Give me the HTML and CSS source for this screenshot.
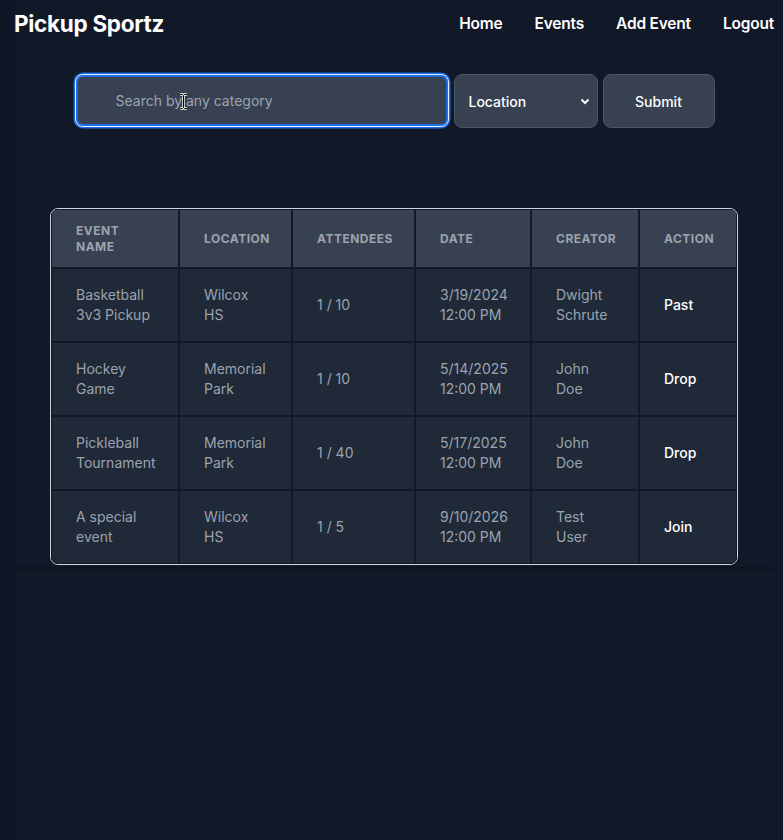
FILE: index.html
```html
<!DOCTYPE html>
<html lang="en">
<head>
<meta charset="utf-8">
<title>Pickup Sportz</title>
<link rel="stylesheet" href="styles.css">
</head>
<body>
<div class="app">
  <header class="topbar">
    <a class="brand" href="#">Pickup Sportz</a>
    <nav class="nav">
      <a href="#">Home</a>
      <a href="#">Events</a>
      <a href="#">Add Event</a>
      <a href="#">Logout</a>
    </nav>
  </header>

  <section class="content">
    <form class="search">
      <div class="search-field">
        <input class="search-input" type="text" placeholder="Search by any category">
        <svg class="cursor" width="9" height="17" viewBox="0 0 9 17"><path d="M1 1.5h2.5L4.5 2.5 5.5 1.5H8M4.5 2.5v12M1 15.5h2.5l1-1 1 1H8" fill="none" stroke="#fff" stroke-width="2.4"/><path d="M1 1.5h2.5L4.5 2.5 5.5 1.5H8M4.5 2.5v12M1 15.5h2.5l1-1 1 1H8" fill="none" stroke="#000" stroke-width="1"/></svg>
      </div>
      <select class="search-select">
        <option>Location</option>
      </select>
      <button class="search-btn" type="button">Submit</button>
    </form>

    <div class="table-wrap">
      <table class="events">
        <thead>
          <tr>
            <th class="c1">Event<br>Name</th>
            <th class="c2">Location</th>
            <th class="c3">Attendees</th>
            <th class="c4">Date</th>
            <th class="c5">Creator</th>
            <th class="c6">Action</th>
          </tr>
        </thead>
        <tbody>
          <tr>
            <td>Basketball<br>3v3 Pickup</td>
            <td>Wilcox<br>HS</td>
            <td>1 / 10</td>
            <td>3/19/2024<br>12:00 PM</td>
            <td>Dwight<br>Schrute</td>
            <td class="action">Past</td>
          </tr>
          <tr>
            <td>Hockey<br>Game</td>
            <td>Memorial<br>Park</td>
            <td>1 / 10</td>
            <td>5/14/2025<br>12:00 PM</td>
            <td>John<br>Doe</td>
            <td class="action">Drop</td>
          </tr>
          <tr>
            <td>Pickleball<br>Tournament</td>
            <td>Memorial<br>Park</td>
            <td>1 / 40</td>
            <td>5/17/2025<br>12:00 PM</td>
            <td>John<br>Doe</td>
            <td class="action">Drop</td>
          </tr>
          <tr>
            <td>A special<br>event</td>
            <td>Wilcox<br>HS</td>
            <td>1 / 5</td>
            <td>9/10/2026<br>12:00 PM</td>
            <td>Test<br>User</td>
            <td class="action">Join</td>
          </tr>
        </tbody>
      </table>
    </div>
  </section>
</div>
</body>
</html>
```

FILE: styles.css
```css
* { box-sizing: border-box; }

html, body {
  margin: 0;
  padding: 0;
  background: #0f1626;
  font-family: Inter, "Liberation Sans", Arial, sans-serif;
  color: #fff;
}

.app {
  margin-left: 14px;
  min-height: 840px;
  background: #111827;
  border-bottom-left-radius: 10px;
}

.topbar {
  display: flex;
  align-items: center;
  justify-content: space-between;
  height: 46px;
  padding-right: 9px;
}

.brand {
  color: #fff;
  text-decoration: none;
  font-weight: 700;
  font-size: 22.5px;
  letter-spacing: -0.3px;
}

.nav {
  display: flex;
  gap: 32px;
}

.nav a {
  color: #fff;
  text-decoration: none;
  font-size: 15.5px;
  font-weight: 600;
  letter-spacing: -0.2px;
}

.content {
  width: 760px;
  padding-top: 28px;
  padding-bottom: 2px;
  box-shadow: 0 3px 3px -1px rgba(0, 0, 0, 0.25);
}

.search {
  display: flex;
  justify-content: center;
  gap: 5px;
  margin: 0;
  padding-left: 1px;
}

.search-field {
  position: relative;
}

.search-input {
  display: block;
  width: 374px;
  height: 53px;
  padding: 0 16px 0 40px;
  background: #374151;
  color: #fff;
  font-family: inherit;
  font-size: 14px;
  border: 1px solid #e6efff;
  border-radius: 8px;
  box-shadow: 0 0 0 1.5px #1a6ee8, inset 0 0 0 2px #1a6ee8;
  outline: none;
}

.search-input::placeholder {
  color: #9ca3af;
}

.cursor {
  position: absolute;
  left: 104px;
  top: 19px;
}

.search-select {
  width: 144px;
  height: 54px;
  padding: 0 14px;
  background: #374151 url("data:image/svg+xml;utf8,<svg xmlns='http://www.w3.org/2000/svg' width='10' height='7' viewBox='0 0 10 7'><path d='M1.5 1.5 5 5 8.5 1.5' fill='none' stroke='white' stroke-width='2'/></svg>") no-repeat right 7px center;
  color: #fff;
  font-family: inherit;
  font-size: 14px;
  font-weight: 500;
  border: 1px solid #4b5563;
  border-radius: 8px;
  appearance: none;
  -webkit-appearance: none;
}

.search-btn {
  width: 112px;
  height: 54px;
  background: #374151;
  color: #fff;
  font-family: inherit;
  font-size: 14px;
  font-weight: 500;
  border: 1px solid #4b5563;
  border-radius: 8px;
}

.table-wrap {
  width: 688px;
  margin: 80px auto 0;
  border: 1px solid #d1d5db;
  border-radius: 8px;
  overflow: hidden;
}

.events {
  width: 686px;
  table-layout: fixed;
  border-collapse: separate;
  border-spacing: 0;
}

.events th,
.events td {
  border: 1px solid #111827;
  padding: 0 24px;
  text-align: left;
  vertical-align: middle;
  white-space: nowrap;
}

.events th {
  height: 59px;
  background: #374151;
  color: #9ca3af;
  font-size: 12px;
  font-weight: 700;
  line-height: 16px;
  text-transform: uppercase;
  letter-spacing: 0.5px;
}

.events td {
  height: 74px;
  background: #1f2937;
  color: #9ca3af;
  font-size: 14px;
  line-height: 20px;
}

.events td.action {
  color: #fff;
  font-weight: 500;
}

.c1 { width: 128px; }
.c2 { width: 113px; }
.c3 { width: 123px; }
.c4 { width: 116px; }
.c5 { width: 108px; }
.c6 { width: 98px; }
```
